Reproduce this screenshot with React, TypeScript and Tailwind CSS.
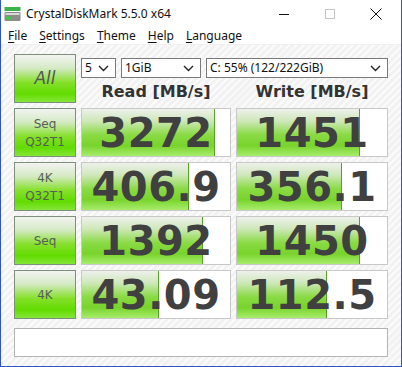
const MENU = ["File", "Settings", "Theme", "Help", "Language"];

const ROWS = [
  { label: ["Seq", "Q32T1"], read: "3272", rp: 0.9, write: "1451", wp: 0.82 },
  { label: ["4K", "Q32T1"], read: "406.9", rp: 0.72, write: "356.1", wp: 0.7 },
  { label: ["Seq"], read: "1392", rp: 0.82, write: "1450", wp: 0.82 },
  { label: ["4K"], read: "43.09", rp: 0.52, write: "112.5", wp: 0.6 },
];

const BTN =
  "bg-[linear-gradient(to_bottom,#f3f3f1_0%,#d4eac4_28%,#86e02c_58%,#62dc00_82%,#84e638_100%)] border border-[#7c907c]";

function Chevron() {
  return (
    <svg width="11" height="7" viewBox="0 0 11 7" className="shrink-0">
      <path d="M1 1 L5.5 5.5 L10 1" fill="none" stroke="#222" strokeWidth="1.4" />
    </svg>
  );
}

function Select({ w, text }: { w: string; text: string }) {
  return (
    <div className={`${w} h-[20px] bg-white border border-[#7a7a7a] flex items-center justify-between pl-[3px] pr-[6px] text-[12px] text-[#111]`}>
      <span>{text}</span>
      <Chevron />
    </div>
  );
}

function Cell({ v, p }: { v: string; p: number }) {
  return (
    <div className="relative h-full bg-white border border-[#c8c8c8] overflow-hidden">
      <div
        className="absolute left-0 top-0 bottom-0 bg-[linear-gradient(to_bottom,#eef1ec_0%,#cfe8bb_25%,#8ada44_55%,#78d42c_78%,#a8ec6c_100%)] border-r border-[#5c9e2c]"
        style={{ width: `${p * 100}%` }}
      />
      <div className="relative h-full flex items-center justify-center font-['DejaVu_Sans',sans-serif] font-bold text-[40px] text-[#404040] leading-none tracking-[0.5px]">
        {v}
      </div>
    </div>
  );
}

export default function App() {
  return (
    <div className="w-[402px] h-[367px] bg-white border-x border-b border-[#2f55c6] flex flex-col font-['Noto_Sans',sans-serif] text-[#111]">
      <div className="h-[28px] flex items-center shrink-0">
        <svg width="17" height="15" viewBox="0 0 17 15" className="ml-[3px] mr-[5px]">
          <rect x="0.5" y="0" width="16" height="4" fill="#3bb34a" />
          <rect x="0.5" y="5" width="16" height="9" rx="1" fill="#8c8c8c" />
          <rect x="1.5" y="6" width="14" height="2" fill="#d8d8d8" />
          <rect x="2" y="9.5" width="5" height="3" fill="#45c54a" />
        </svg>
        <span className="text-[12px]">CrystalDiskMark 5.5.0 x64</span>
        <div className="ml-auto flex items-center h-full mr-[2px]">
          <div className="w-[46px] h-full flex items-center justify-center">
            <div className="w-[10px] h-px bg-[#111]" />
          </div>
          <div className="w-[46px] h-full flex items-center justify-center">
            <div className="w-[10px] h-[10px] border border-[#c4c4c4]" />
          </div>
          <div className="w-[46px] h-full flex items-center justify-center">
            <svg width="12" height="12" viewBox="0 0 12 12">
              <path d="M0.5 0.5 L11.5 11.5 M11.5 0.5 L0.5 11.5" stroke="#111" strokeWidth="1" />
            </svg>
          </div>
        </div>
      </div>
      <div className="h-[16px] flex items-center gap-[12px] pl-[7px] text-[12px] shrink-0">
        {MENU.map((m) => (
          <span key={m}>
            <span className="underline underline-offset-2">{m[0]}</span>
            {m.slice(1)}
          </span>
        ))}
      </div>
      <div className="flex-1 border-t border-[#f0f0f0] bg-[repeating-linear-gradient(135deg,#f2f2f2_0px,#f2f2f2_3px,#fbfbfb_3px,#fbfbfb_5px)] pt-[9px] px-[13px]">
        <div className="grid grid-cols-[62px_150px_152px] gap-[5px] auto-rows-[49px]">
          <div className={`${BTN} flex items-center justify-center text-[17px] text-[#505a50] italic font-['DejaVu_Sans',sans-serif]`}>
            All
          </div>
          <div className="col-span-2 flex flex-col">
            <div className="flex gap-[5px] mt-[4px]">
              <Select w="w-[35px]" text="5" />
              <Select w="w-[80px]" text="1GiB" />
              <Select w="w-[182px]" text="C: 55% (122/222GiB)" />
            </div>
            <div className="grid grid-cols-[150px_152px] gap-[5px] mt-[6px] font-['DejaVu_Sans',sans-serif] font-bold text-[16px] text-[#333] leading-none">
              <div className="text-center">Read [MB/s]</div>
              <div className="text-center">Write [MB/s]</div>
            </div>
          </div>
          {ROWS.map((r, i) => (
            <div key={i} className="contents">
              <div className={`${BTN} flex flex-col items-center justify-center text-[12px] leading-[18px] text-[#555f55] font-['DejaVu_Sans',sans-serif]`}>
                {r.label.map((l) => (
                  <span key={l}>{l}</span>
                ))}
              </div>
              <Cell v={r.read} p={r.rp} />
              <Cell v={r.write} p={r.wp} />
            </div>
          ))}
        </div>
        <div className="mt-[9px] h-[29px] bg-white border border-[#b4b4b4]" />
      </div>
    </div>
  );
}
